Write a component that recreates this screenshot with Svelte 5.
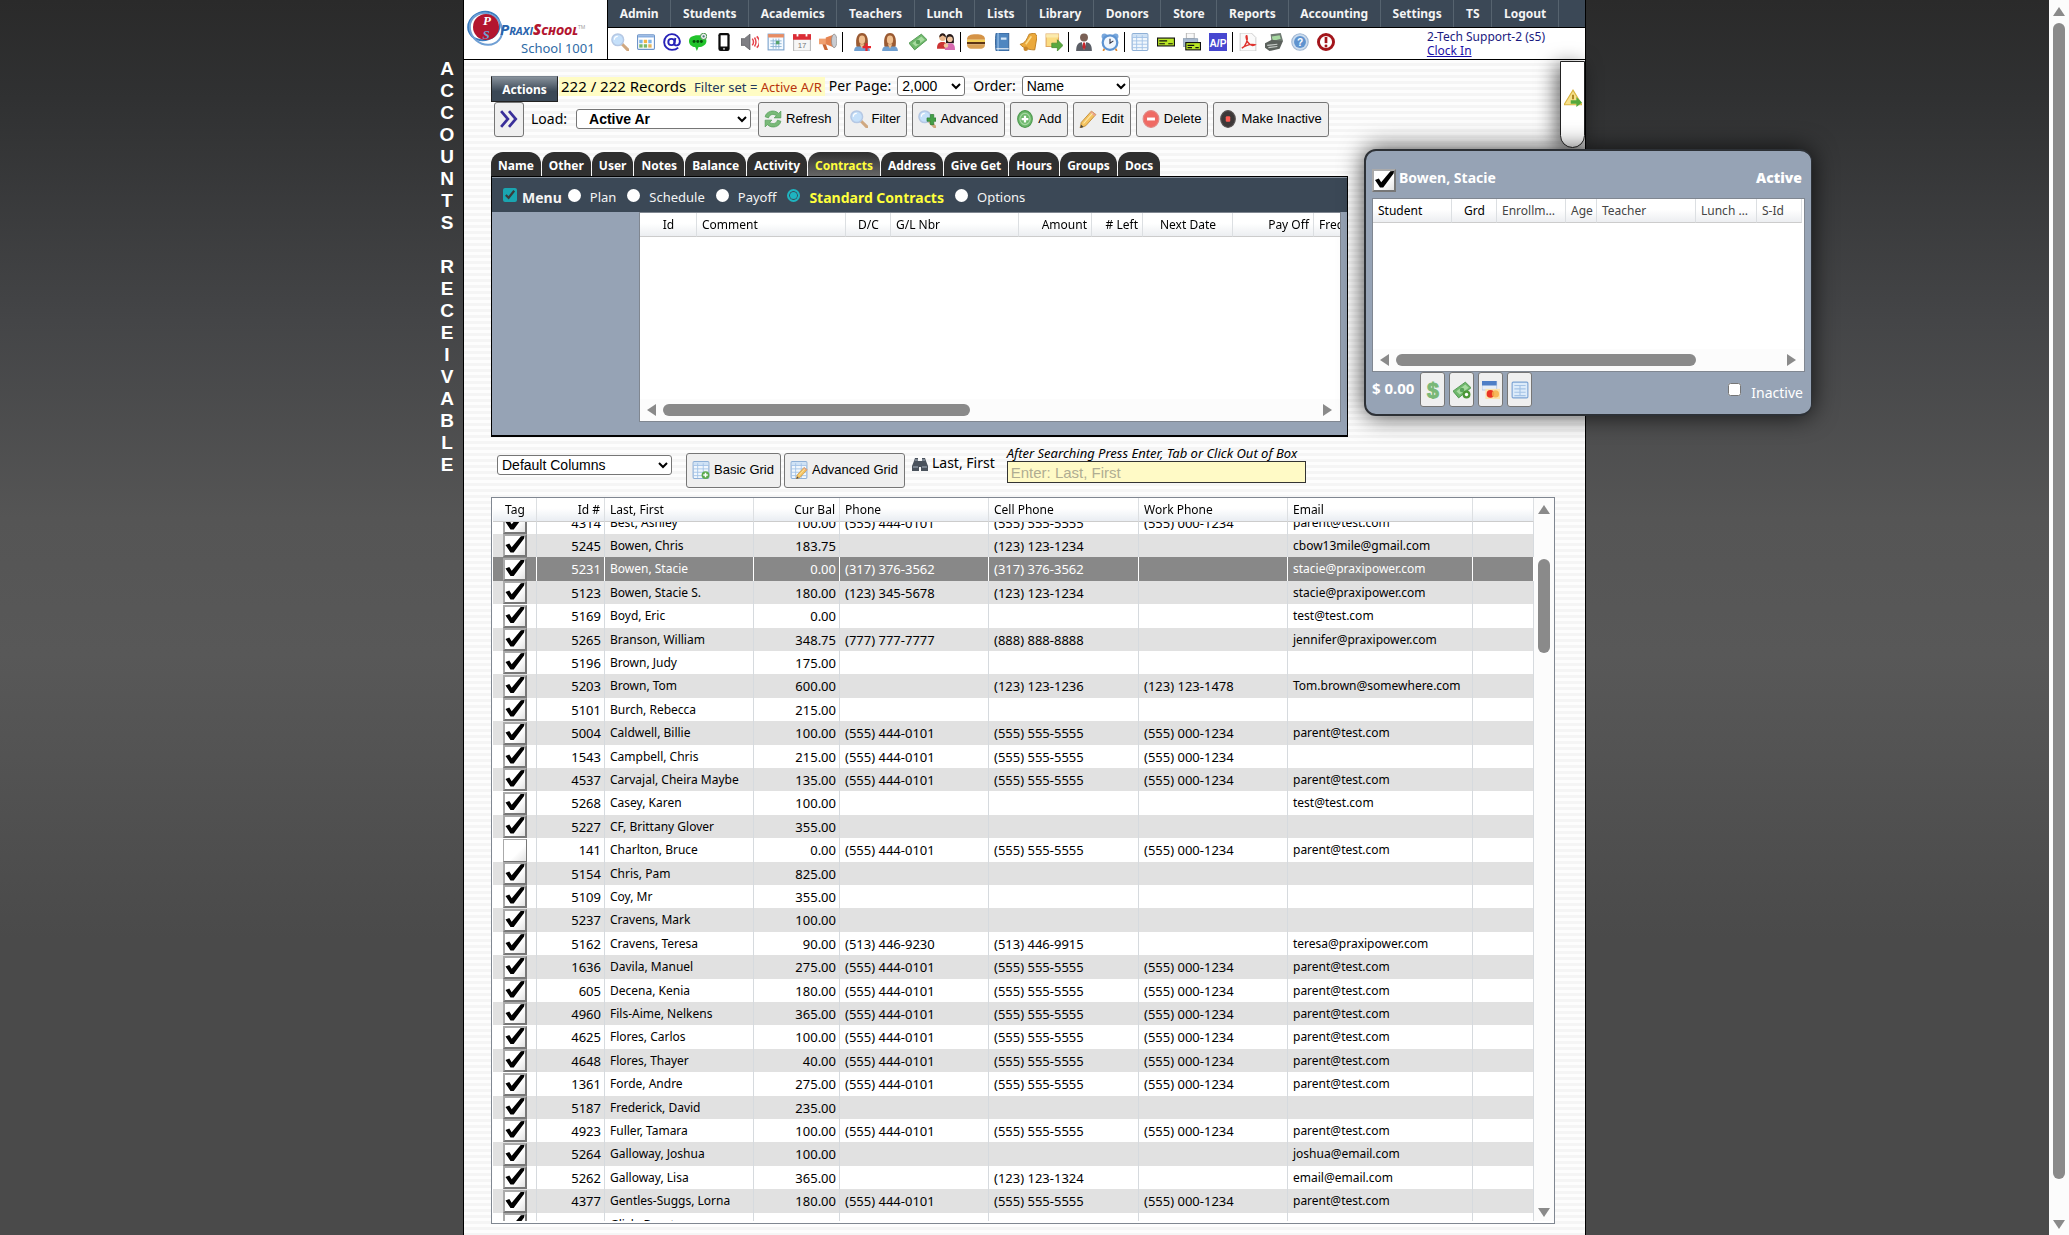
<script>
  import { onMount } from 'svelte';

  const navItems = [
    'Admin', 'Students', 'Academics', 'Teachers', 'Lunch', 'Lists', 'Library', 'Donors',
    'Store', 'Reports', 'Accounting', 'Settings', 'TS', 'Logout'
  ];

  const toolGroups = [
    ['search', 'window', 'at', 'chat', 'phone', 'speaker', 'calendar', 'dates', 'megaphone'],
    ['userAdd', 'user', 'money', 'family'],
    ['burger', 'book', 'bell', 'noteGo'],
    ['staff', 'clock'],
    ['sheet', 'check', 'printCheck', 'ap'],
    ['pdf', 'register', 'help', 'alert']
  ];

  const actions = [
    ['refresh', 'Refresh'],
    ['search', 'Filter'],
    ['searchAdd', 'Advanced'],
    ['add', 'Add'],
    ['pencil', 'Edit'],
    ['remove', 'Delete'],
    ['stop', 'Make Inactive']
  ];

  const tabs = [
    'Name', 'Other', 'User', 'Notes', 'Balance', 'Activity', 'Contracts', 'Address',
    'Give Get', 'Hours', 'Groups', 'Docs'
  ];

  const views = ['Plan', 'Schedule', 'Payoff', 'Standard Contracts', 'Options'];

  const contractCols = [
    ['Id', 57, 'center'],
    ['Comment', 149, 'left'],
    ['D/C', 45, 'center'],
    ['G/L Nbr', 128, 'left'],
    ['Amount', 73, 'right'],
    ['# Left', 51, 'right'],
    ['Next Date', 90, 'center'],
    ['Pay Off', 81, 'right'],
    ['Freq', 60, 'left']
  ];

  const studentCols = [
    ['Student', 79, 'left'],
    ['Grd', 45, 'center'],
    ['Enrollm…', 69, 'left'],
    ['Age', 31, 'center'],
    ['Teacher', 99, 'left'],
    ['Lunch …', 61, 'left'],
    ['S-Id', 45, 'left']
  ];

  const accountCols = [
    ['Tag', 44, 'center'],
    ['Id #', 68, 'right'],
    ['Last, First', 149, 'left'],
    ['Cur Bal', 86, 'right'],
    ['Phone', 149, 'left'],
    ['Cell Phone', 150, 'left'],
    ['Work Phone', 149, 'left'],
    ['Email', 185, 'left'],
    ['', 61, 'left']
  ];

  const P = '(555) 444-0101';
  const C = '(555) 555-5555';
  const W = '(555) 000-1234';
  const E = 'parent@test.com';

  let accounts = $state([
    [4314, 'Best, Ashley', '100.00', P, C, W, E],
    [5245, 'Bowen, Chris', '183.75', '', '(123) 123-1234', '', 'cbow13mile@gmail.com'],
    [5231, 'Bowen, Stacie', '0.00', '(317) 376-3562', '(317) 376-3562', '', 'stacie@praxipower.com'],
    [5123, 'Bowen, Stacie S.', '180.00', '(123) 345-5678', '(123) 123-1234', '', 'stacie@praxipower.com'],
    [5169, 'Boyd, Eric', '0.00', '', '', '', 'test@test.com'],
    [5265, 'Branson, William', '348.75', '(777) 777-7777', '(888) 888-8888', '', 'jennifer@praxipower.com'],
    [5196, 'Brown, Judy', '175.00', '', '', '', ''],
    [5203, 'Brown, Tom', '600.00', '', '(123) 123-1236', '(123) 123-1478', 'Tom.brown@somewhere.com'],
    [5101, 'Burch, Rebecca', '215.00', '', '', '', ''],
    [5004, 'Caldwell, Billie', '100.00', P, C, W, E],
    [1543, 'Campbell, Chris', '215.00', P, C, W, ''],
    [4537, 'Carvajal, Cheira Maybe', '135.00', P, C, W, E],
    [5268, 'Casey, Karen', '100.00', '', '', '', 'test@test.com'],
    [5227, 'CF, Brittany Glover', '355.00', '', '', '', ''],
    [141, 'Charlton, Bruce', '0.00', P, C, W, E],
    [5154, 'Chris, Pam', '825.00', '', '', '', ''],
    [5109, 'Coy, Mr', '355.00', '', '', '', ''],
    [5237, 'Cravens, Mark', '100.00', '', '', '', ''],
    [5162, 'Cravens, Teresa', '90.00', '(513) 446-9230', '(513) 446-9915', '', 'teresa@praxipower.com'],
    [1636, 'Davila, Manuel', '275.00', P, C, W, E],
    [605, 'Decena, Kenia', '180.00', P, C, W, E],
    [4960, 'Fils-Aime, Nelkens', '365.00', P, C, W, E],
    [4625, 'Flores, Carlos', '100.00', P, C, W, E],
    [4648, 'Flores, Thayer', '40.00', P, C, W, E],
    [1361, 'Forde, Andre', '275.00', P, C, W, E],
    [5187, 'Frederick, David', '235.00', '', '', '', ''],
    [4923, 'Fuller, Tamara', '100.00', P, C, W, E],
    [5264, 'Galloway, Joshua', '100.00', '', '', '', 'joshua@email.com'],
    [5262, 'Galloway, Lisa', '365.00', '', '(123) 123-1324', '', 'email@email.com'],
    [4377, 'Gentles-Suggs, Lorna', '180.00', P, C, W, E],
    [5188, 'Glick, Brent', '95.00', '', '(123) 123-1234', '', '']
  ].map(([id, name, balance, phone, cell, work, email]) => (
    { id, name, balance, phone, cell, work, email, tagged: id !== 141 }
  )));

  let selectedId = $state(5231);
  let activeTab = $state('Contracts');
  let view = $state('Standard Contracts');
  let scroller;

  onMount(() => {
    scroller.scrollTop = 11;
  });

  const person = '<path d="M1 16c0-4 3-5 7-5s7 1 7 5z" fill="#6f9fd0"/><path d="M3 12C2 4 4 0 8 0s6 4 5 12z" fill="#9a5a32"/><ellipse cx="8" cy="6" rx="2.800" ry="3.800" fill="#f0c090"/><path d="M6 10h4l-2 4z" fill="#f0c090"/>';
  const lens = '<path d="M10 10l5 5" stroke="#d0a880" stroke-width="2.800" stroke-linecap="round"/><circle cx="6" cy="6" r="5.200" fill="#c5e0fa" stroke="#b5c8e4" stroke-width="1.300"/><path d="M3 6a3 3 0 0 1 3-3" stroke="#fff" fill="none"/>';
  const sheet = '<rect x="1" y="0.500" width="14" height="15" rx="1" fill="#f1f7fd" stroke="#8fb0d6"/><path d="M1.500 1h13v3h-13z" fill="#cfe2f5"/><path d="M1 4h14M1 7h14M1 10h14M1 13h14M5 2v13M10 2v13" stroke="#a4c3e6" stroke-width=".8"/>';
  const note = '<path d="M0 9L11 1l5 5L5 15z" fill="#6fb86c" stroke="#4b934b" stroke-width=".8"/><path d="M3 9l8-6 3 3-8 6z" fill="#a8dba0"/><circle cx="8" cy="8" r="2" fill="#5aa45a"/>';
  const pencil = '<path d="M2 11L11 1l4 3-9 10-5 2z" fill="#f4c360" stroke="#c08a35" stroke-width=".8"/><path d="M11 1l4 3-1 1.500-4-3z" fill="#e7a090"/><path d="M1 16l1-3 2 2z" fill="#444"/><path d="M4 12l8-9" stroke="#fde9ad"/>';

  const icons = {
    search: lens,
    searchAdd: lens + '<path d="M8 7h3V4h3v3h2v3h-2v3h-3v-3H8z" fill="#43a047" stroke="#2a7a30" stroke-width=".6"/>',
    window: '<rect x="0.500" y="1.500" width="15" height="13" rx="1" fill="#fff" stroke="#6d94c8"/><path d="M1 2h14v2H1z" fill="#8cb0e0"/><path d="M2 6h3v3H2zM10 6h3v3h-3z" fill="#7fb5e8"/><path d="M6 6h3v3H6z" fill="#f2b544"/><path d="M2 10h3v3H2z" fill="#79b96a"/><path d="M6 10h3v3H6z" fill="#79b96a"/><path d="M10 10h3v3h-3z" fill="#e5b45a"/>',
    at: '<g fill="none" stroke="#2722b8" stroke-width="1.700"><circle cx="7.500" cy="8" r="2.800"/><path d="M11 4.500l-1 5c0 2.500 5 2 5-2A7 7 0 1 0 8 15c2 0 4-.5 5.500-2"/></g>',
    chat: '<path d="M8 2c5 0 7.500 2 7.500 5s-3 5.500-7 5.500L7 16l-1.500-3.500C2 12 0 10 0 7s3-5 8-5z" fill="#22c32c"/><circle cx="4.500" cy="7.500" r="1.300" fill="#064f0a"/><circle cx="7.800" cy="7.500" r="1.300" fill="#064f0a"/><circle cx="11" cy="7.500" r="1.300" fill="#064f0a"/><circle cx="13" cy="3" r="2.800" fill="#eee" stroke="#3b8c40" stroke-width=".8"/><circle cx="13" cy="3" r="1" fill="#477"/>',
    phone: '<rect x="3" y="0" width="10" height="16" rx="2" fill="#0b0b0b"/><path d="M5 2h6v10H5z" fill="#fff"/><circle cx="8" cy="14" r="1" fill="#aaa"/>',
    speaker: '<path d="M0 5h3l5-4v14l-5-4H0z" fill="#7f7f84" stroke="#55555a" stroke-width=".6"/><path d="M10 5c1.500 2 1.500 4 0 6M12 4c2 3 2 5 0 8M14 3c3 3 3 7 0 10" stroke="#e5444c" stroke-width="1.300" fill="none"/>',
    calendar: '<rect x="1" y="1" width="14" height="14" fill="#f5faff" stroke="#7ca3cd"/><path d="M1 1h14v3H1z" fill="#e88c62"/><path d="M3 7h10M3 9.500h10M3 12h10M5.500 5v9M8 5v9M10.500 5v9" stroke="#8db4d4" stroke-width=".8"/><path d="M8 7h3v3H8z" fill="#57a36c"/>',
    dates: '<rect x="0.500" y="2" width="15" height="14" rx="1" fill="#f6f6f6" stroke="#bbb"/><path d="M0 1h16v5H0z" fill="#db2d36"/><path d="M4 0v3M12 0v3" stroke="#fff" stroke-width="1.600"/><text x="8" y="13" text-anchor="middle" font-size="7" font-family="Liberation Sans" fill="#777">17</text>',
    megaphone: '<path d="M0 5h7v5H0z" fill="#f0a070"/><path d="M6 4l8-3v12L6 10z" fill="#e58350"/><path d="M3 10h3l2 5H5z" fill="#c96533"/><ellipse cx="13.500" cy="7" rx="2.400" ry="6" fill="#c9ccd2" stroke="#888" stroke-width=".6"/>',
    user: person,
    userAdd: person + '<path d="M11 9h2v2.500h3v2h-3V16h-2v-2.500H8.500v-2H11z" fill="#e8242b"/>',
    money: note,
    family: '<circle cx="5" cy="4" r="3" fill="#e9b68c"/><path d="M2 4c0-5 6-5 6 0L5 2z" fill="#2c1c18"/><path d="M0 14c0-5 2-6 5-6s4 1 4 6z" fill="#c33"/><path d="M8 9V5c0-6 7-5 7 0v4z" fill="#261a1a"/><circle cx="11.500" cy="5.500" r="2.500" fill="#f0c6a0"/><path d="M7 15c0-5 2-6 5-6s4 2 4 6z" fill="#d76bb0"/><circle cx="8" cy="11" r="2" fill="#f0c6a0"/>',
    burger: '<path d="M0 6c0-4 3-5 8-5s8 1 8 5z" fill="#d59346"/><path d="M0 6h16v2H0z" fill="#f3cf54"/><path d="M0 8h16v2H0z" fill="#5c3415"/><path d="M0 10h16c0 3-2 4-4 4H4c-2 0-4-1-4-4z" fill="#d8a054"/>',
    book: '<path d="M3 0h11v16H3c-1 0-1-16 0-16z" fill="#4f86c0" stroke="#2c5a90" stroke-width=".8"/><path d="M4.500 0v16" stroke="#9cc3ea"/><path d="M7 4h5v2H7z" fill="#d5e7f8"/><path d="M3 14h11" stroke="#e8eef5"/>',
    bell: '<path d="M9 1l5-1 2 3-2 12C10 15 4 14 1 10c5-1 6-5 8-9z" fill="#eba93c" stroke="#ba7b1c" stroke-width=".8"/><path d="M11 3L6 10" stroke="#fbdc8c" stroke-width="1.500"/><circle cx="6" cy="14" r="2" fill="#c7862a"/>',
    noteGo: '<path d="M1 1h11v11H1z" fill="#fbdc82" stroke="#e0a860"/><path d="M1 1h11v3H1z" fill="#fbeaae"/><path d="M6 9h5V6l5 5-5 5v-3H6z" fill="#59a83f" stroke="#3e8428" stroke-width=".6"/>',
    staff: '<circle cx="8" cy="4" r="3.500" fill="#7a6055"/><path d="M1 16c0-6 2-8 7-8s7 2 7 8z" fill="#5a5e66"/><path d="M6 8h4l-2 7z" fill="#fff"/><path d="M7.300 8.500h1.500l.7 4-1.500 2.500L6.600 12.500z" fill="#c9252b"/>',
    clock: '<circle cx="3" cy="3" r="2.500" fill="#78a7dc"/><circle cx="13" cy="3" r="2.500" fill="#78a7dc"/><circle cx="8" cy="8.500" r="6.500" fill="#f0f7ff" stroke="#5e94d2" stroke-width="2"/><path d="M8 5v4l3-2" stroke="#334" fill="none"/><path d="M3 14l-1 2M13 14l1 2" stroke="#e08a30" stroke-width="1.500"/>',
    sheet,
    check: '<rect x="0.500" y="4.500" width="15" height="7" fill="#b9e626" stroke="#111"/><path d="M2 7h7M2 9.500h5M10 9.500h4" stroke="#111"/>',
    printCheck: '<path d="M3 0h7v5H3z" fill="#f8f8f8" stroke="#999" stroke-width=".6"/><path d="M0 5h13v7H0z" fill="#a9bbd0" stroke="#7d8fa6" stroke-width=".6"/><rect x="2.500" y="8.500" width="13" height="6.500" fill="#b9e626" stroke="#111"/><path d="M4 11h6M4 13h4M11 13h3" stroke="#111"/>',
    ap: '<path d="M0 0h16v16H0z" fill="#4747d0"/><text x="8" y="12" text-anchor="middle" font-size="9" font-weight="700" font-family="Liberation Sans" fill="#fff">A/P</text>',
    pdf: '<path d="M1 0h10l4 4v12H1z" fill="#fafafa" stroke="#c8c8c8" stroke-width=".8"/><path d="M2.500 13.500c4-2 5.500-8 4.500-11-1-1-1 3 1 6 1.500 2 4 3 6 2-3-1-7 0-11.500 3z" fill="none" stroke="#df332f" stroke-width="1.300"/>',
    register: '<path d="M5 1l9-1 2 7-10 3z" fill="#6f7b72"/><path d="M6 3l7-1 1 3-7 2z" fill="#a6d8a0"/><path d="M0 9l6-3 10 1-3 7-9 2-4-3z" fill="#5b615c"/><path d="M2 11l9-1M3 13l8-1" stroke="#c7ccc8"/>',
    help: '<circle cx="8" cy="8" r="7.300" fill="#cbdcee" stroke="#9fb6d3"/><circle cx="8" cy="8" r="5.300" fill="#5e93cf"/><text x="8" y="11.500" text-anchor="middle" font-size="9" font-weight="700" font-family="Liberation Sans" fill="#fff">?</text>',
    alert: '<circle cx="8" cy="8" r="6.700" fill="#fff" stroke="#a3151b" stroke-width="2.600"/><path d="M8 3.500v5.500" stroke="#a3151b" stroke-width="2.400"/><circle cx="8" cy="11.600" r="1.300" fill="#a3151b"/>',
    refresh: '<path d="M1 6c1-5 8-7 12-3l2-2v6H9l2-2C8 3 5 4 4 7z" fill="#79ba78" stroke="#4f9a55" stroke-width=".6"/><path d="M15 10c-1 5-8 7-12 3l-2 2V9h6l-2 2c3 2 6 1 7-2z" fill="#79ba78" stroke="#4f9a55" stroke-width=".6"/>',
    add: '<ellipse cx="8" cy="8" rx="6.500" ry="7.500" fill="#6cb86b" stroke="#4f9a50"/><ellipse cx="8" cy="8" rx="4.500" ry="5" fill="none" stroke="#a7d8a4"/><path d="M8 5v6M5 8h6" stroke="#fff" stroke-width="2"/>',
    remove: '<ellipse cx="8" cy="8" rx="7" ry="7.500" fill="#ef6a63" stroke="#e08a86"/><path d="M4.500 8h7" stroke="#fff" stroke-width="2.600"/>',
    stop: '<ellipse cx="8" cy="8" rx="6.500" ry="7.500" fill="#3d3838" stroke="#5b5656"/><rect x="6" y="5.500" width="4" height="5" rx="1" fill="#ff5a52"/>',
    pencil,
    chevrons: '<path d="M1 1l6 7-6 7M8 1l6 7-6 7" stroke="#3a2f9a" stroke-width="2.400" fill="none"/>',
    basicGrid: sheet + '<circle cx="12" cy="12.500" r="3.500" fill="#5cab4d"/><path d="M12 10.500v4M10 12.500h4" stroke="#fff" stroke-width="1.300"/>',
    advancedGrid: sheet + '<g transform="translate(5 5) scale(.68)">' + pencil + '</g>',
    binoculars: '<path d="M2 5l1-3h3v3h4V2h3l1 3 2 5v5H9v-4H7v4H0v-5z" fill="#4a525c"/><path d="M1 11h5M10 11h5M3 4h3M10 4h3" stroke="#aab4c0"/>',
    dollar: '<text x="8" y="15" text-anchor="middle" font-size="19" font-weight="700" font-family="Liberation Sans" fill="#79b877" stroke="#79b877" stroke-width=".8">$</text>',
    moneyAdd: note + '<circle cx="12" cy="12" r="3.500" fill="#4c9636"/><circle cx="12" cy="12" r="1.500" fill="#fff"/>',
    cards: '<path d="M0 0h13v8H0z" fill="#e6eef8" stroke="#a8bedd" stroke-width=".6"/><path d="M0 0h13v4H0z" fill="#4f7fc6"/><path d="M3 7h13v9H3z" fill="#fbe3ae"/><circle cx="7.500" cy="11.500" r="3.400" fill="#ea3323"/><circle cx="12" cy="11.500" r="3.200" fill="#f4b04a" opacity=".85"/>',
    form: '<rect x="1" y="1" width="14" height="14" rx="1" fill="#dcebfa" stroke="#7ba3d4"/><path d="M3 4h10M3 7h10M3 10h10M3 13h10M8 4v9" stroke="#a4c3e6"/>',
    warnGo: '<path d="M8 1l8 13H0z" fill="#f6e08a" stroke="#d9b440"/><path d="M8 5v4" stroke="#a07a10" stroke-width="1.500"/><path d="M6 10h5V7l5 5-5 4v-3H6z" fill="#55a83c"/>'
  };
</script>

{#snippet icon(name)}
  <svg class="icon" viewBox="0 0 16 16" aria-hidden="true">{@html icons[name]}</svg>
{/snippet}

{#snippet headings(cols)}
  <colgroup>
    {#each cols as [, width]}
      <col style="width: {width}px" />
    {/each}
  </colgroup>
  <thead>
    <tr>
      {#each cols as [label, , align]}
        <th class={align} scope="col">{label}</th>
      {/each}
    </tr>
  </thead>
{/snippet}

<div class="screen">
  <div class="gutter">
    <div class="side-title">
      {#each 'ACCOUNTS RECEIVABLE' as letter}
        <span>{letter}</span>
      {/each}
    </div>
  </div>

  <main class="page">
    <header class="header">
      <div class="logo">
        <svg class="logo-mark" viewBox="0 0 40 40" aria-hidden="true">
          <ellipse cx="18" cy="18" rx="16" ry="14" fill="none" stroke="#3a7cc0" stroke-width="2" transform="rotate(-20 18 18)" />
          <ellipse cx="20" cy="21" rx="15" ry="17" fill="none" stroke="#6f9fd4" stroke-width="2" transform="rotate(-50 20 21)" />
          <circle cx="20" cy="19" r="13" fill="#b3152f" />
          <text text-anchor="middle" font-size="13" font-weight="700" font-style="italic" font-family="Liberation Serif"><tspan x="21" y="17" fill="#fff">P</tspan><tspan x="20" y="31" fill="#6f9fd4">S</tspan></text>
        </svg>
        <div class="logo-text">
          <div class="brand"><span>Praxi</span><b>School</b><sup>TM</sup></div>
          <div class="school">School 1001</div>
        </div>
      </div>
      <div class="header-main">
        <nav class="nav">
          {#each navItems as item}
            <a href="#{item}">{item}</a>
          {/each}
        </nav>
        <div class="tools">
          {#each toolGroups as group}
            <div class="tool-group">
              {#each group as name}
                <button class="tool" type="button" aria-label={name}>{@render icon(name)}</button>
              {/each}
            </div>
          {/each}
          <div class="session">
            <span>2-Tech Support-2 (s5)</span>
            <a href="#clock">Clock In</a>
          </div>
        </div>
      </div>
    </header>

    <div class="content">
      <div class="filters">
        <button class="actions-button" type="button">Actions</button>
        <p class="records">
          222 / 222 Records <small>Filter set = <em>Active A/R</em></small>
        </p>
        <label for="per-page">Per Page:</label>
        <select id="per-page" class="per-page"><option>2,000</option></select>
        <label for="order">Order:</label>
        <select id="order" class="order"><option>Name</option></select>
      </div>

      <div class="commands">
        <button class="btn expand" type="button" aria-label="Expand">{@render icon('chevrons')}</button>
        <label for="load">Load:</label>
        <select id="load" class="load"><option>Active Ar</option></select>
        {#each actions as [name, label]}
          <button class="btn" type="button">{@render icon(name)}{label}</button>
        {/each}
      </div>

      <div class="tabs">
        {#each tabs as tab}
          <button class="tab" class:active={tab === activeTab} type="button" onclick={() => (activeTab = tab)}>{tab}</button>
        {/each}
      </div>

      <section class="panel">
        <div class="views">
          <label class="menu-toggle"><input type="checkbox" checked /> Menu</label>
          {#each views as name}
            <label class:chosen={name === view}>
              <input type="radio" name="view" value={name} bind:group={view} />
              {name}
            </label>
          {/each}
        </div>
        <div class="grid contracts">
          <table>{@render headings(contractCols)}</table>
          <div class="hbar" aria-hidden="true">
            <i class="arrow left"></i>
            <div class="track"><i class="thumb contracts-thumb"></i></div>
            <i class="arrow right"></i>
          </div>
        </div>
      </section>

      <div class="grid-tools">
        <select class="columns" aria-label="Columns"><option>Default Columns</option></select>
        <button class="btn" type="button">{@render icon('basicGrid')}Basic Grid</button>
        <button class="btn" type="button">{@render icon('advancedGrid')}Advanced Grid</button>
        <label class="search-label" for="search">{@render icon('binoculars')}Last, First</label>
        <div class="search">
          <span>After Searching Press Enter, Tab or Click Out of Box</span>
          <input id="search" type="text" placeholder="Enter: Last, First" />
        </div>
      </div>

      <div class="grid accounts">
        <div class="scroller" bind:this={scroller}>
          <table>
            {@render headings(accountCols)}
            <tbody>
              {#each accounts as row (row.id)}
                <tr class:selected={row.id === selectedId} onclick={() => (selectedId = row.id)}>
                  <td class="center"><input class="tag" type="checkbox" aria-label="Tag {row.name}" bind:checked={row.tagged} /></td>
                  <td class="right num">{row.id}</td>
                  <td>{row.name}</td>
                  <td class="right num">{row.balance}</td>
                  <td class="num">{row.phone}</td>
                  <td class="num">{row.cell}</td>
                  <td class="num">{row.work}</td>
                  <td>{row.email}</td>
                  <td></td>
                </tr>
              {/each}
            </tbody>
          </table>
        </div>
        <div class="vbar" aria-hidden="true">
          <i class="arrow up"></i>
          <div class="track"><i class="thumb accounts-thumb"></i></div>
          <i class="arrow down"></i>
        </div>
      </div>
    </div>

    <button class="drawer" type="button" aria-label="Alerts">{@render icon('warnGo')}</button>

    <aside class="card">
      <div class="card-head">
        <input class="tag" type="checkbox" id="card-tag" checked />
        <label for="card-tag">Bowen, Stacie</label>
        <strong>Active</strong>
      </div>
      <div class="grid students">
        <table>{@render headings(studentCols)}</table>
        <div class="hbar" aria-hidden="true">
          <i class="arrow left"></i>
          <div class="track"><i class="thumb students-thumb"></i></div>
          <i class="arrow right"></i>
        </div>
      </div>
      <div class="card-foot">
        <strong>$ 0.00</strong>
        {#each ['dollar', 'moneyAdd', 'cards', 'form'] as name}
          <button class="btn small" type="button" aria-label={name}>{@render icon(name)}</button>
        {/each}
        <label class="inactive"><input type="checkbox" /> Inactive</label>
      </div>
    </aside>
  </main>

  <div class="gutter"></div>

  <div class="vbar page-bar" aria-hidden="true">
    <i class="arrow up"></i>
    <div class="track"><i class="thumb page-thumb"></i></div>
    <i class="arrow down"></i>
  </div>
</div>

<style>
  :global(body) {
    background: #4a4a4a;
  }

  .screen {
    display: flex;
    height: 100vh;
    overflow: hidden;
    background: linear-gradient(#2a2a2a, #303132 8%, #444547 26%, #555 42%, #585858 53%, #4a4a4a 76%);
    font-family: 'Noto Sans', sans-serif;
    font-size: 12px;
    color: #000;
  }

  .gutter {
    flex: 1;
    display: flex;
    justify-content: flex-end;
  }

  .side-title {
    display: flex;
    flex-direction: column;
    width: 16px;
    padding: 58px 8px 0 0;
    font: bold 19px/22px 'Liberation Sans', sans-serif;
    color: #fff;
    text-align: center;
  }

  .side-title span {
    height: 22px;
  }

  .page {
    position: relative;
    width: 1121px;
    border: solid #000;
    border-width: 0 1px;
    background: repeating-linear-gradient(#fdfdfd 0 3px, #f5f5f5 3px 6px);
  }

  .icon {
    display: block;
    width: 18px;
    height: 18px;
    flex: none;
  }

  button {
    font-family: inherit;
    cursor: pointer;
  }

  /* header */
  .header {
    display: flex;
    height: 59px;
    border-bottom: 1px solid #000;
    background: #fff;
  }

  .logo {
    display: flex;
    width: 143px;
    border-right: 1px solid #000;
  }

  .logo-mark {
    width: 40px;
    height: 42px;
    margin: 7px 0 0 2px;
    flex: none;
  }

  .logo-text {
    margin-left: -6px;
    padding-top: 19px;
  }

  .brand {
    font: italic bold 15px/20px 'Open Sans', sans-serif;
    font-variant: small-caps;
    color: #2a64ad;
    white-space: nowrap;
  }

  .brand b {
    color: #b3152f;
  }

  .brand sup {
    font: 5px/5px 'Open Sans', sans-serif;
    color: #999;
  }

  .school {
    padding-left: 21px;
    font-size: 13px;
    line-height: 18px;
    color: #2f6ba6;
  }

  .header-main {
    flex: 1;
  }

  .nav {
    display: flex;
    height: 27px;
    padding-right: 26px;
    border-bottom: 1px solid #000;
    background: #3b4856;
  }

  .nav a {
    flex: 1 1 auto;
    border-right: 1px solid #56636f;
    color: #f4f4f4;
    font-weight: bold;
    line-height: 27px;
    text-align: center;
    text-decoration: none;
  }

  .tools {
    display: flex;
    align-items: center;
    height: 28px;
    padding-left: 2px;
  }

  .tool-group {
    display: flex;
    gap: 6px;
    padding-right: 4px;
  }

  .tool-group:nth-child(2) {
    gap: 8px;
  }

  .tool-group + .tool-group {
    padding-left: 5px;
    border-left: 1px solid #000;
  }

  .tool-group:nth-child(2) {
    padding-left: 9px;
  }

  .tool {
    width: 20px;
    height: 20px;
    padding: 1px;
    border: none;
    background: none;
  }

  .session {
    display: flex;
    flex-direction: column;
    margin-left: auto;
    padding: 3px 40px 0 0;
    line-height: 14px;
    color: #1a1a80;
  }

  .session a {
    color: #1b10a8;
  }

  /* filters and commands */
  .content {
    padding: 16px 30px 0 27px;
  }

  .filters {
    display: flex;
    align-items: flex-start;
    height: 26px;
    font-size: 14px;
    line-height: 20px;
  }

  .actions-button {
    width: 67px;
    height: 26px;
    padding: 0;
    border: 1px solid #222;
    border-top-color: #77818c;
    background: linear-gradient(#87919b, #3b4856 60%);
    color: #fff;
    font-size: 12px;
    font-weight: bold;
  }

  .records {
    margin: 1px 4px 0 1px;
    padding: 0 3px 0 2px;
    background: #fffcc4;
    font-size: 15px;
    line-height: 18px;
  }

  .records small {
    margin-left: 4px;
    font-size: 13px;
    color: #23395d;
  }

  .records em {
    color: #b8340c;
    font-style: normal;
  }

  select {
    height: 20px;
    padding: 0;
    border: 1px solid #767676;
    border-radius: 3px;
    background-color: #fff;
    color: #000;
    font: 14px 'Liberation Sans', sans-serif;
  }

  .per-page {
    width: 68px;
    margin: 0 8px 0 6px;
  }

  .order {
    width: 108px;
    margin-left: 6px;
  }

  .commands {
    display: flex;
    align-items: center;
    gap: 5px;
    padding-left: 3px;
    font-size: 14px;
  }

  .commands label,
  .load {
    margin-bottom: 2px;
  }

  .btn {
    display: flex;
    align-items: center;
    gap: 4px;
    height: 35px;
    padding: 0 6px 2px 5px;
    border: 1px solid #767676;
    border-radius: 3px;
    background: #efefef;
    color: #000;
    font: 13px 'Liberation Sans', sans-serif;
    white-space: nowrap;
  }

  .expand {
    width: 30px;
    margin-right: 2px;
  }

  .load {
    width: 175px;
    margin-left: 4px;
    margin-right: 2px;
    padding-left: 8px;
    font-weight: bold;
  }

  /* tabs */
  .tabs {
    display: flex;
    gap: 1px;
    margin-top: 15px;
  }

  .tab {
    height: 24px;
    padding: 2px 7px 0;
    border: none;
    border-radius: 12px 12px 0 0;
    background: #303030;
    color: #fff;
    font-size: 12px;
    font-weight: bold;
  }

  .tab.active {
    background: linear-gradient(#303030, #666);
    color: #ffff3c;
  }

  /* contracts panel */
  .panel {
    margin-right: 207px;
    padding-bottom: 13px;
    border: 1px solid #000;
    border-bottom-width: 2px;
    background: #96a3b5;
  }

  .views {
    display: flex;
    align-items: center;
    gap: 11px;
    height: 34px;
    padding-left: 9px;
    border-top: 1px solid #8a94a0;
    background: #3b4856;
    color: #f4f4f4;
    font-size: 13px;
  }

  .views label {
    display: flex;
    align-items: center;
    gap: 9px;
    padding-top: 4px;
  }

  .views input {
    width: 14px;
    height: 14px;
    margin: 0 0 4px;
    accent-color: #1aa5b0;
  }

  .views [type='radio'] {
    appearance: none;
    box-sizing: border-box;
    width: 13px;
    height: 13px;
    border-radius: 50%;
    background: #fff;
  }

  .views [type='radio']:checked {
    border: 2px solid #1fb4c0;
    background: #1fb4c0;
    box-shadow: inset 0 0 0 1px #3b4856;
  }

  .views .menu-toggle {
    gap: 5px;
    margin: 0 -5px 0 2px;
    font-size: 14px;
    font-weight: bold;
  }

  .views .chosen {
    color: #ffff3c;
    font-size: 14px;
    font-weight: bold;
  }

  /* grids */
  .grid {
    box-sizing: border-box;
    overflow: hidden;
    border: 1px solid #808791;
    background: #fff;
  }

  table {
    table-layout: fixed;
    border-collapse: separate;
    border-spacing: 0;
    width: 0;
  }

  th {
    box-sizing: border-box;
    height: 24px;
    padding: 0 4px 0 5px;
    border-right: 1px solid #dcdfe2;
    border-bottom: 1px solid #ccc;
    background: linear-gradient(#fff 45%, #eceef1);
    font-size: 12px;
    font-weight: normal;
    line-height: 16px;
    text-align: left;
    white-space: nowrap;
    overflow: hidden;
  }

  .center {
    text-align: center;
  }

  .right {
    text-align: right;
  }

  .contracts {
    display: flex;
    flex-direction: column;
    justify-content: space-between;
    height: 210px;
    margin: 0 6px 0 147px;
  }

  .students {
    display: flex;
    flex-direction: column;
    justify-content: space-between;
    height: 174px;
  }

  .students th {
    color: #444;
  }

  .students th:nth-child(-n + 2) {
    color: #000;
  }

  .accounts {
    display: flex;
    height: calc(100vh - 508px);
    margin-top: 9px;
    padding-bottom: 2px;
  }

  .scroller {
    flex: 1;
    padding-left: 1px;
    overflow: hidden;
  }

  thead {
    position: sticky;
    top: 0;
    z-index: 1;
  }

  .accounts th {
    background: linear-gradient(#fff 45%, #e9edf2);
  }

  td {
    box-sizing: border-box;
    height: 23px;
    padding: 0 3px;
    border-right: 1px solid #d6dade;
    font-size: 12px;
    line-height: 20px;
    white-space: nowrap;
  }

  /* row heights average a little over 23px */
  tr:nth-child(5n) td,
  tr:nth-child(5n + 3) td {
    height: 24px;
  }

  tr:nth-child(even) td {
    background: #e1e1e1;
  }

  td:nth-child(n + 3):not(.right) {
    padding-left: 5px;
  }

  td:first-child {
    padding: 0;
  }

  .num {
    font-size: 13px;
  }

  tr.selected td {
    background: #888;
    border-color: #fff;
    color: #fff;
  }

  .tag {
    appearance: none;
    display: block;
    box-sizing: border-box;
    width: 24px;
    height: 23px;
    margin: 0 auto;
    border: 2px solid #aaa;
    border-right-color: #777;
    border-bottom-color: #777;
    background: linear-gradient(135deg, #fff 60%, #e2e2e2);
  }

  .tag:not(:checked) {
    border-width: 1px;
  }

  .tag:checked::before {
    content: '';
    display: block;
    width: 20px;
    height: 18px;
    background: #000;
    clip-path: polygon(5% 50%, 24% 42%, 36% 62%, 82% 2%, 100% 0, 98% 14%, 46% 92%, 30% 92%);
  }

  /* scrollbars */
  .arrow {
    flex: none;
    width: 0;
    height: 0;
    border: solid transparent;
  }

  .thumb {
    display: block;
    border-radius: 6px;
    background: #8a8a8a;
  }

  .track {
    flex: 1;
  }

  .hbar {
    display: flex;
    align-items: center;
    gap: 7px;
    height: 22px;
    padding: 0 8px 0 7px;
    background: #fcfcfc;
  }

  .hbar .thumb {
    height: 12px;
  }

  .arrow.left {
    border-width: 6px 9px 6px 0;
    border-right-color: #8a8a8a;
  }

  .arrow.right {
    border-width: 6px 0 6px 9px;
    border-left-color: #8a8a8a;
  }

  .contracts-thumb {
    width: 47%;
  }

  .students-thumb {
    width: 78%;
  }

  .vbar {
    display: flex;
    flex-direction: column;
    align-items: center;
    box-sizing: border-box;
    width: 20px;
    padding: 7px 0 4px;
    background: #fcfcfc;
  }

  .vbar .thumb {
    width: 12px;
  }

  .arrow.up {
    border-width: 0 6px 9px;
    border-bottom-color: #8a8a8a;
  }

  .arrow.down {
    border-width: 9px 6px 0;
    border-top-color: #8a8a8a;
  }

  .accounts-thumb {
    height: 94px;
    margin-top: 45px;
  }

  .page-bar {
    padding-bottom: 6px;
  }

  .page-thumb {
    height: 96%;
    margin-top: 7px;
  }

  /* grid tools */
  .grid-tools {
    display: flex;
    margin-top: 16px;
    padding-left: 6px;
  }

  .columns {
    width: 175px;
    margin: 2px 14px 0 0;
  }

  .grid-tools .btn {
    margin-right: 3px;
  }

  .search-label {
    display: flex;
    gap: 4px;
    height: 20px;
    padding-left: 4px;
    font-size: 14px;
    line-height: 20px;
  }

  .search-label .icon {
    width: 16px;
    height: 16px;
    margin-top: 3px;
  }

  .search {
    display: flex;
    flex-direction: column;
    width: 299px;
    margin: -8px 0 0 12px;
  }

  .search span {
    font-size: 13px;
    font-style: italic;
    line-height: 16px;
    white-space: nowrap;
  }

  .search input {
    box-sizing: border-box;
    height: 22px;
    padding: 0 3px;
    border: 1px solid #333;
    background: #fffac6;
    font: 15px 'Liberation Sans', sans-serif;
  }

  .search input::placeholder {
    color: #b0ad92;
  }

  /* overlays */
  .drawer {
    position: absolute;
    top: 61px;
    right: 0;
    display: flex;
    justify-content: center;
    width: 25px;
    height: 87px;
    padding: 27px 0 0;
    border: 1px solid #222;
    border-radius: 0 0 13px 13px;
    background: #fff;
    box-shadow: -4px 4px 20px rgba(0, 0, 0, 0.6);
  }

  .card {
    position: absolute;
    top: 149px;
    left: 900px;
    box-sizing: border-box;
    width: 448px;
    height: 267px;
    padding: 0 6px;
    border: 2px solid #2d3136;
    border-width: 2px 1px 2px 2px;
    border-radius: 12px;
    background: #96a3b5;
    box-shadow: 0 0 24px rgba(0, 0, 0, 0.75);
    color: #fff;
    font-size: 14px;
  }

  .card-head {
    display: flex;
    align-items: center;
    gap: 3px;
    height: 47px;
    padding-right: 3px;
    font-weight: bold;
  }

  .card-head .tag {
    margin: 12px 0 0;
  }

  .card-head label,
  .card-head strong {
    padding-top: 6px;
  }

  .card-head strong {
    margin-left: auto;
  }

  .card-foot {
    display: flex;
    gap: 4px;
    padding-right: 2px;
  }

  .card-foot strong {
    padding: 6px 2px 0 0;
    font-size: 15px;
  }

  .small {
    width: 25px;
    height: 35px;
    padding: 0;
    justify-content: center;
  }

  .inactive {
    display: flex;
    align-items: center;
    gap: 10px;
    margin-left: auto;
    padding-top: 6px;
  }

  .inactive input {
    width: 13px;
    height: 13px;
    margin: 0 0 6px;
  }
</style>
